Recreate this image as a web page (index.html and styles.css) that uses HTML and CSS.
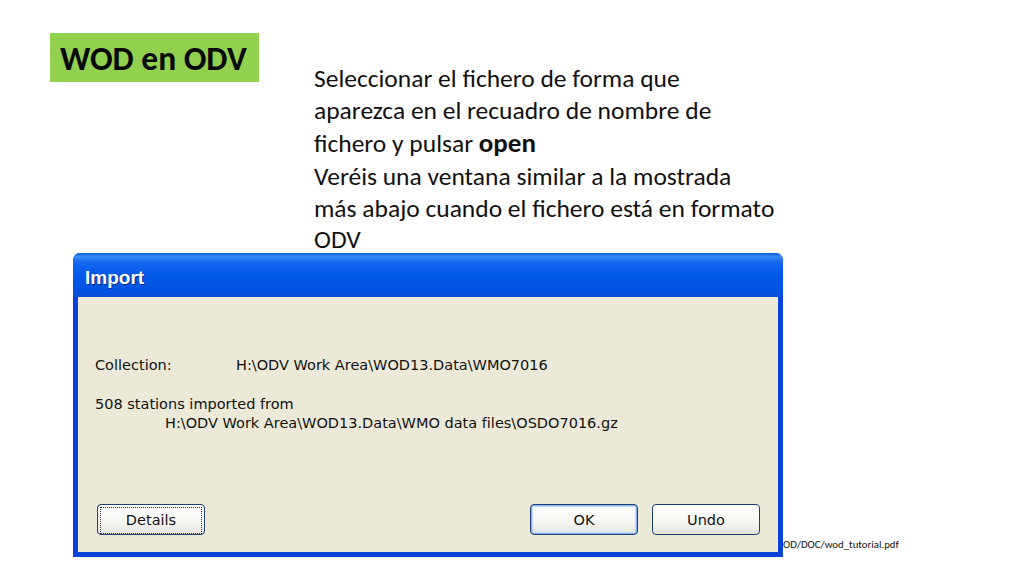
FILE: index.html
```html
<!DOCTYPE html>
<html lang="es">
<head>
<meta charset="utf-8">
<title>WOD en ODV</title>
<link rel="stylesheet" href="styles.css">
</head>
<body>
<div class="slide">
  <div class="top">
    <div class="title">WOD en ODV</div>
    <div class="intro">
      <div>Seleccionar el fichero de forma que</div>
      <div>aparezca en el recuadro de nombre de</div>
      <div class="l3">fichero y pulsar <b>open</b></div>
      <div>Veréis una ventana similar a la mostrada</div>
      <div>más abajo cuando el fichero está en formato</div>
      <div>ODV</div>
    </div>
  </div>
  <div class="bottom">
    <div class="dialog">
      <div class="titlebar">Import</div>
      <div class="body">
        <div class="info">
          <div class="row"><span class="label">Collection:</span><span>H:\ODV Work Area\WOD13.Data\WMO7016</span></div>
          <div class="imported">508 stations imported from</div>
          <div class="path">H:\ODV Work Area\WOD13.Data\WMO data files\OSDO7016.gz</div>
        </div>
        <div class="buttons">
          <button class="btn focus"><span>Details</span></button>
          <div class="spacer"></div>
          <button class="btn default">OK</button>
          <button class="btn">Undo</button>
        </div>
      </div>
    </div>
    <div class="foot">OD/DOC/wod_tutorial.pdf</div>
  </div>
</div>
</body>
</html>
```
FILE: styles.css
```css
html, body {
  margin: 0;
  padding: 0;
  background: #ffffff;
}
.slide {
  width: 1024px;
  height: 576px;
  padding: 33px 0 0 50px;
  box-sizing: border-box;
  font-family: Carlito, Lato, "Open Sans", sans-serif;
  color: #111;
  overflow: hidden;
}
.top {
  display: flex;
  align-items: flex-start;
  height: 220px;
}
.title {
  width: 209px;
  height: 49px;
  box-sizing: border-box;
  background: #92D050;
  font-weight: bold;
  font-size: 33.5px;
  line-height: 51px;
  padding-left: 10px;
  color: #0a0a0a;
  white-space: nowrap;
}
.intro {
  margin-left: 55px;
  margin-top: 30px;
  font-size: 25.5px;
  line-height: 31.5px;
  white-space: nowrap;
}
.intro .l3 {
  line-height: 34px;
}
.intro b {
  font-size: 27px;
}
.bottom {
  display: flex;
  align-items: flex-end;
  margin-left: 23px;
}
.dialog {
  width: 710px;
  height: 304px;
  box-sizing: border-box;
  background: #0842D6;
  border-radius: 7px 7px 0 0;
  padding: 0 5px 5px 5px;
  display: flex;
  flex-direction: column;
  font-family: "DejaVu Sans", Verdana, sans-serif;
}
.titlebar {
  height: 44px;
  margin: 0 -5px;
  border-radius: 7px 7px 0 0;
  background: linear-gradient(to bottom, #0A5BE0 0%, #3A8CF5 8%, #1466EE 22%, #0358E8 50%, #0254E2 80%, #0B4ED8 100%);
  color: #fff;
  font-family: "Liberation Sans", Arial, sans-serif;
  font-weight: bold;
  font-size: 19px;
  line-height: 50px;
  padding-left: 12px;
  text-shadow: 1px 1px 0 #0a2a8a;
}
.body {
  flex: 1;
  background: #ECE9D8;
  padding: 0 18px 17px 19px;
  display: flex;
  flex-direction: column;
  justify-content: space-between;
  font-size: 14.5px;
  color: #111;
}
.info {
  padding-top: 59px;
  line-height: 19px;
}
.row {
  display: flex;
}
.label {
  width: 141px;
}
.info > * {
  margin-left: -2px;
}
.imported {
  margin-top: 20px;
}
.path {
  padding-left: 70px;
}
.buttons {
  display: flex;
  gap: 14px;
}
.spacer {
  flex: 1;
}
.btn {
  width: 108px;
  height: 31px;
  border: 1px solid #1C3E72;
  border-radius: 4px;
  background: linear-gradient(to bottom, #ffffff 0%, #f6f6f2 60%, #e4e3dc 100%);
  font-family: "DejaVu Sans", Verdana, sans-serif;
  font-size: 14.5px;
  color: #111;
  padding: 0;
  margin: 0;
}
.btn.default {
  box-shadow: inset 0 0 0 1px #8cb4f2, inset 0 0 0 2px #c2d6f8;
}
.btn.focus span {
  display: block;
  margin: 2px;
  height: 25px;
  line-height: 25px;
  border: 1px dotted #333;
}
.foot {
  font-family: Carlito, Lato, "Open Sans", sans-serif;
  font-size: 10.8px;
  padding-bottom: 6px;
  color: #111;
}
```
